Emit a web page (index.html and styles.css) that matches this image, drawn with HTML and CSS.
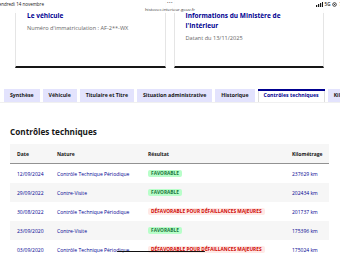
FILE: index.html
```html
<!DOCTYPE html>
<html lang="fr">
  <head>
    <meta charset="UTF-8" />
    <meta name="viewport" content="width=device-width, initial-scale=1.0" />
    <title>HistoVec - Contrôles techniques</title>
    <link rel="stylesheet" href="styles.css">
  </head>
  <body>
    <!-- barre d'état du téléphone -->
    <div class="statusbar">
      <span class="sb-date">Vendredi 14 novembre</span>
      <div class="sb-center">
        <span class="sb-dots">•••</span>
        <span class="sb-url">histovec.interieur.gouv.fr</span>
      </div>
      <div class="sb-right">
        <svg width="7" height="5" viewBox="0 0 7 5">
          <rect x="0" y="3" width="1.2" height="2" fill="#161616" />
          <rect x="2" y="2" width="1.2" height="3" fill="#161616" />
          <rect x="4" y="1" width="1.2" height="4" fill="#161616" />
          <rect x="6" y="0" width="1" height="5" fill="#161616" />
        </svg>
        <span>5G</span>
        <svg width="5" height="5" viewBox="0 0 5 5">
          <circle cx="2.5" cy="2.5" r="1.8" fill="none" stroke="#161616" stroke-width="0.8" />
          <circle cx="2.5" cy="2.5" r="0.6" fill="#161616" />
        </svg>
        <span>7</span>
      </div>
    </div>

    <div class="cards">
      <div class="card">
        <h3 class="card-title">Le véhicule</h3>
        <p class="card-desc">Numéro d'immatriculation : AF-2**-WX</p>
      </div>
      <div class="card">
        <h3 class="card-title">Informations du Ministère de l'Intérieur</h3>
        <p class="card-desc">Datant du 13/11/2025</p>
      </div>
    </div>

    <nav class="tabs">
      <span class="tab">Synthèse</span>
      <span class="tab">Véhicule</span>
      <span class="tab">Titulaire et Titre</span>
      <span class="tab">Situation administrative</span>
      <span class="tab">Historique</span>
      <span class="tab active">Contrôles techniques</span>
      <span class="tab">Kilométrage</span>
    </nav>

    <section class="panel">
      <h2>Contrôles techniques</h2>
      <table class="ct-table">
        <colgroup>
          <col class="c-date" />
          <col class="c-nature" />
          <col class="c-result" />
          <col class="c-km" />
        </colgroup>
        <thead>
          <tr>
            <th>Date</th>
            <th>Nature</th>
            <th>Résultat</th>
            <th>Kilométrage</th>
          </tr>
        </thead>
        <tbody>
          <tr>
            <td>12/09/2024</td>
            <td>Contrôle Technique Périodique</td>
            <td><span class="badge ok">Favorable</span></td>
            <td>237629 km</td>
          </tr>
          <tr>
            <td>29/09/2022</td>
            <td>Contre-Visite</td>
            <td><span class="badge ok">Favorable</span></td>
            <td>202434 km</td>
          </tr>
          <tr>
            <td>30/08/2022</td>
            <td>Contrôle Technique Périodique</td>
            <td><span class="badge ko">Défavorable pour défaillances majeures</span></td>
            <td>201737 km</td>
          </tr>
          <tr>
            <td>23/09/2020</td>
            <td>Contre-Visite</td>
            <td><span class="badge ok">Favorable</span></td>
            <td>175396 km</td>
          </tr>
          <tr>
            <td>03/09/2020</td>
            <td>Contrôle Technique Périodique</td>
            <td><span class="badge ko">Défavorable pour défaillances majeures</span></td>
            <td>175024 km</td>
          </tr>
        </tbody>
      </table>
    </section>

    <div class="home-indicator"></div>
  </body>
</html>
```

FILE: styles.css
```css
/* styles.css */
body {
  margin: 0;
  width: 340px;
  height: 255px;
  overflow: hidden;
  position: relative;
  background: #fff;
  font-family: "Open Sans", Arial, sans-serif;
  color: #161616;
}

/* barre d'état */
.statusbar {
  position: absolute;
  top: 0;
  left: 0;
  right: 0;
  height: 13px;
  overflow: hidden;
  background: rgba(255, 255, 255, 0.9);
  font-size: 4.5px;
  color: #161616;
  z-index: 2;
}

.sb-date {
  position: absolute;
  left: -4px;
  top: 1px;
}

.sb-center {
  display: flex;
  flex-direction: column;
  align-items: center;
  line-height: 5px;
}

.sb-dots {
  font-size: 4px;
  letter-spacing: 0.5px;
  color: #666;
}

.sb-url {
  font-size: 4.3px;
  color: #3a3a3a;
  margin-top: 2px;
}

.sb-right {
  position: absolute;
  right: -2px;
  top: 1px;
  display: flex;
  align-items: center;
  gap: 2px;
  font-weight: 600;
}

/* cartes */
.cards {
  display: flex;
  gap: 8px;
  padding: 0 16px 0 15px;
}

.card {
  flex: 1;
  box-sizing: border-box;
  height: 68px;
  padding: 11px 11px 0;
  border: 1px solid #e5e5e5;
  border-top: none;
  border-bottom: 2px solid #161616;
}

.card-title {
  margin: 0;
  font-size: 6.5px;
  line-height: 10px;
  font-weight: 700;
  color: #000091;
}

.card-desc {
  margin: 3px 0 0;
  font-size: 5.6px;
  line-height: 8px;
  color: #666;
}

/* onglets */
.tabs {
  display: flex;
  gap: 3px;
  margin-top: 21px;
  padding-left: 4px;
  white-space: nowrap;
  overflow: hidden;
  border-bottom: 1px solid #f0f0f0;
}

.tab {
  flex-shrink: 0;
  height: 13px;
  line-height: 13px;
  padding: 0 6px;
  background: #e3e3fd;
  font-size: 5.2px;
  font-weight: 700;
  color: #161616;
}

.tab.active {
  background: #fff;
  color: #000091;
  box-shadow: inset 0 2px 0 #000091, inset 1px 0 0 #ddd, inset -1px 0 0 #ddd;
}

/* tableau */
.panel {
  padding: 0 11px 0 10px;
}

.panel h2 {
  margin: 23px 0 6px;
  font-size: 8.2px;
  line-height: 12px;
  font-weight: 700;
  color: #161616;
}

.ct-table {
  width: 100%;
  border-collapse: collapse;
  table-layout: fixed;
  font-size: 5px;
}

.c-date { width: 40px; }
.c-nature { width: 91px; }
.c-result { width: 144px; }
.c-km { width: 44px; }

.ct-table th {
  height: 19px;
  padding: 0 0 0 7px;
  text-align: left;
  font-weight: 700;
  background: #f6f6f6;
  border-bottom: 1px solid #929292;
}

.ct-table td {
  height: 19px;
  padding: 0 0 0 7px;
  color: #000091;
  white-space: nowrap;
}

.ct-table tbody tr:nth-child(even) {
  background: #f6f6f6;
}

.badge {
  display: inline-block;
  padding: 0 3px;
  height: 7px;
  line-height: 7px;
  border-radius: 2px;
  font-size: 4.8px;
  font-weight: 700;
  text-transform: uppercase;
}

.badge.ok {
  background: #b8fec9;
  color: #18753c;
}

.badge.ko {
  background: #ffe9e6;
  color: #ce0500;
}

.home-indicator {
  position: absolute;
  left: 117px;
  bottom: 3px;
  width: 88px;
  height: 1.5px;
  border-radius: 1px;
  background: #111;
}
```
